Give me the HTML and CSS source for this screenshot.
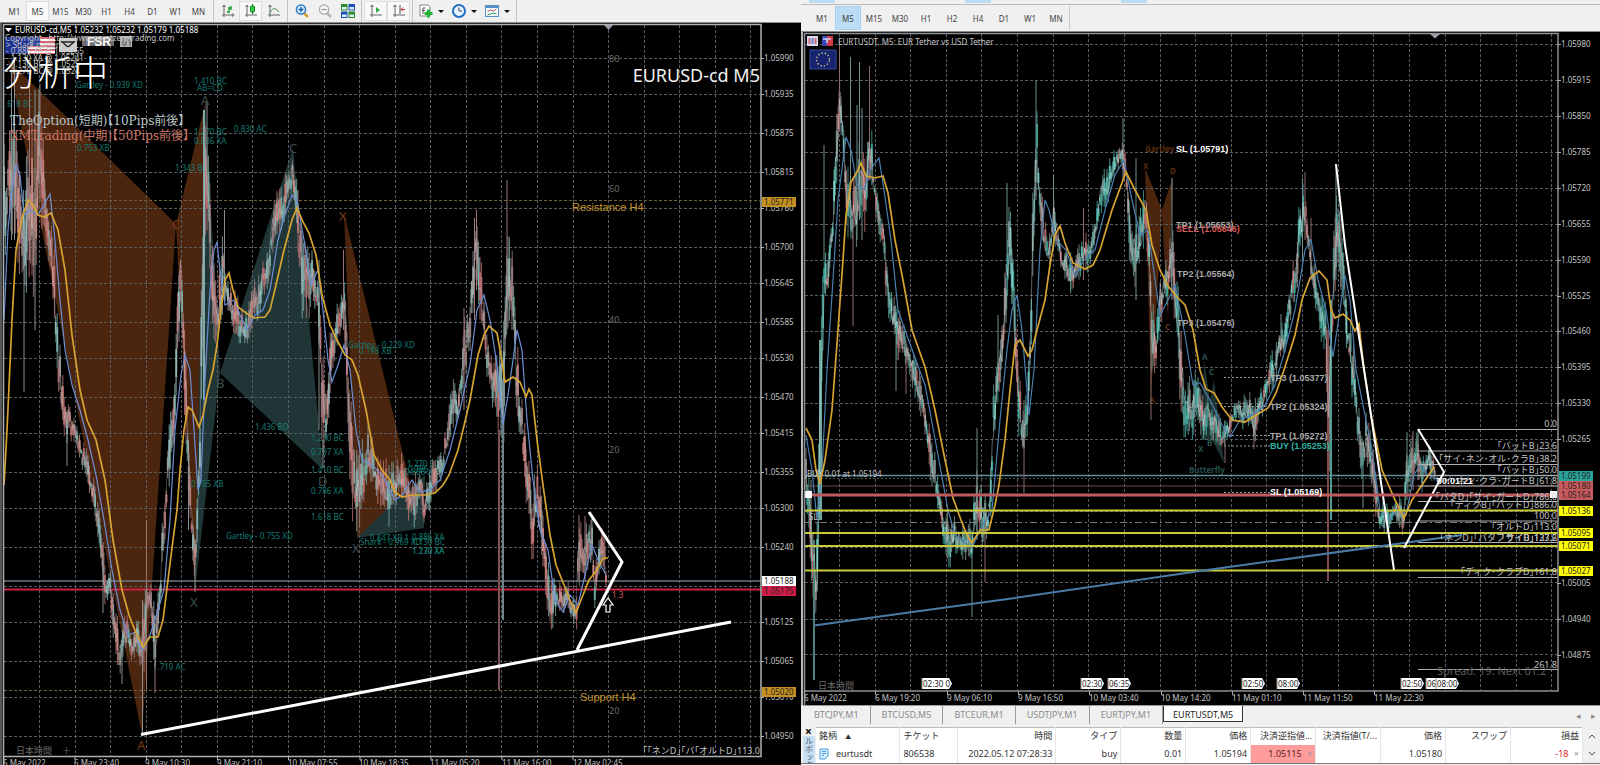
FILE: index.html
```html
<!DOCTYPE html>
<html lang="ja">
<head>
<meta charset="utf-8">
<title>EURUSD-cd M5 / EURTUSDT M5</title>
<link rel="stylesheet" href="styles.css">
</head>
<body>
<main class="desk">
  <section class="pane">
    <div class="bar bar-left">
      <div class="group frames">
        <button>M1</button><button class="on">M5</button><button>M15</button><button>M30</button><button>H1</button><button>H4</button><button>D1</button><button>W1</button><button>MN</button>
      </div>
      <div class="group">
        <button aria-label="Bar chart"><svg class="ico" viewBox="0 0 14 14"><path d="M3 1v12M1 11h12M1.500 3L3 1l1.500 2M11 9.500l2 1.500-2 1.500" stroke="#666" fill="none"/><path d="M8 3v6M8 4h2M6 8h2M10 2v4" stroke="#149a2a" fill="none" stroke-width="1.400"/></svg></button>
        <button class="on" aria-label="Candlesticks"><svg class="ico" viewBox="0 0 14 14"><path d="M3 1v12M1 11h12M1.500 3L3 1l1.500 2" stroke="#666" fill="none"/><path d="M8.500 0v10" stroke="#0a6a1a"/><rect x="6.500" y="2" width="4" height="6" rx="1" fill="#2fc845" stroke="#128a25"/></svg></button>
        <button aria-label="Line chart"><svg class="ico" viewBox="0 0 14 14"><path d="M3 1v12M1 11h12M1.500 3L3 1l1.500 2" stroke="#666" fill="none"/><path d="M3 9c2-5 5-6 9-1" stroke="#3e8f50" fill="none"/></svg></button>
      </div>
      <div class="group">
        <button aria-label="Zoom in"><svg class="ico" viewBox="0 0 14 14"><path d="M9 9l4 4" stroke="#d6a52c" stroke-width="2.500"/><circle cx="6" cy="5.500" r="4.600" fill="#d8ecfb" stroke="#2b7cc4" stroke-width="1.500"/><path d="M3.500 5.500h5M6 3v5" stroke="#1b66b5" stroke-width="1.500"/></svg></button>
        <button aria-label="Zoom out"><svg class="ico" viewBox="0 0 14 14"><path d="M9 9l4 4" stroke="#b5b5b5" stroke-width="2.500"/><circle cx="6" cy="5.500" r="4.600" fill="#f5f5f5" stroke="#aaa" stroke-width="1.300"/><path d="M3.500 5.500h5" stroke="#999" stroke-width="1.300"/></svg></button>
        <button aria-label="Tile windows"><svg class="ico" viewBox="0 0 14 14"><path d="M0 0h6.500v6.500H0zM7.500 7.500H14V14H7.500z" fill="#2c8b2c"/><path d="M7.500 0H14v6.500H7.500zM0 7.500h6.500V14H0z" fill="#1d4fae"/><path d="M1 3h4.500v2.500H1zM8.500 3H13v2.500H8.500zM1 10.500h4.500V13H1zM8.500 10.500H13V13H8.500z" fill="#dfeeff"/></svg></button>
      </div>
      <div class="group">
        <button class="on" aria-label="Auto scroll"><svg class="ico" viewBox="0 0 14 14"><path d="M3 1v12M1 11h12M1.500 3L3 1l1.500 2" stroke="#666" fill="none"/><path d="M7 3l4 3-4 3z" fill="#2ca844"/></svg></button>
        <button class="on" aria-label="Chart shift"><svg class="ico" viewBox="0 0 14 14"><path d="M3 1v12M1 11h12M1.500 3L3 1l1.500 2" stroke="#666" fill="none"/><path d="M8 1v9" stroke="#456"/><path d="M13 5.500H9M11 3.500l-2 2 2 2" stroke="#c33" fill="none"/></svg></button>
      </div>
      <div class="group wide">
        <button aria-label="Indicators"><svg class="ico" viewBox="0 0 14 14"><path d="M1 1h8l2 2v9H1z" fill="#fff" stroke="#888"/><path d="M4 10V4h2.500M3 6.500h3" stroke="#555" fill="none"/><path d="M9.500 5.500v8M5.500 9.500h8" stroke="#22b53a" stroke-width="3"/></svg><i></i></button>
        <button aria-label="Periods"><svg class="ico" viewBox="0 0 14 14"><circle cx="7" cy="7" r="6" fill="#e8f4ff" stroke="#1f6fc2" stroke-width="2"/><path d="M7 3.500V7h3" stroke="#345" fill="none"/></svg><i></i></button>
        <button aria-label="Templates"><svg class="ico" viewBox="0 0 14 14"><rect x=".5" y="1.500" width="13" height="11" fill="#f7fbff" stroke="#5b8fc4"/><path d="M1 3h12" stroke="#5b8fc4" stroke-width="2"/><path d="M2.500 7.500l3-1.500 3 1 3-2" stroke="#a55" fill="none"/><path d="M2.500 11l3-1 3-1 3 1" stroke="#2a9b4a" fill="none"/></svg><i></i></button>
      </div>
    </div>
    <svg id="eurusd" class="chart" viewBox="0 23 801 742"></svg>
  </section>

  <section class="pane pane-right">
    <div class="strip"><span></span><span></span><span></span></div>
    <div class="bar bar-right">
      <div class="group frames">
        <button>M1</button><button class="on">M5</button><button>M15</button><button>M30</button><button>H1</button><button>H2</button><button>H4</button><button>D1</button><button>W1</button><button>MN</button>
      </div>
    </div>
    <svg id="eurtusdt" class="chart" viewBox="801 32 799 673"></svg>
    <nav class="tabs">
      <a href="#a">BTCJPY,M1</a><a href="#b">BTCUSD,M5</a><a href="#c">BTCEUR,M1</a><a href="#d">USDTJPY,M1</a><a href="#e">EURTJPY,M1</a><a href="#f" class="current">EURTUSDT,M5</a>
      <span class="arrows"><button aria-label="Previous">◂</button><button aria-label="Next">▸</button></span>
    </nav>
    <div class="toolbox">
      <div class="side"><button aria-label="Close">×</button><span>ルボックス</span></div>
      <table>
        <colgroup><col style="width:84px"><col style="width:58px"><col style="width:98px"><col style="width:65px"><col style="width:65px"><col style="width:65px"><col style="width:65px"><col style="width:65px"><col style="width:65px"><col style="width:65px"><col style="width:72px"></colgroup>
        <thead><tr><th class="l">銘柄 <small>▲</small></th><th class="l">チケット</th><th>時間</th><th>タイプ</th><th>数量</th><th>価格</th><th>決済逆指値...</th><th>決済指値(T/...</th><th>価格</th><th>スワップ</th><th>損益</th></tr></thead>
        <tbody><tr><td class="l"><svg class="doc" viewBox="0 0 10 12"><path d="M1 1h8v7l-3 3H1z" fill="#d9efff" stroke="#3f9fd8"/><path d="M3 3.500h4M3 5.500h4M3 7.500h2" stroke="#3f9fd8"/></svg>eurtusdt</td><td class="l">806538</td><td>2022.05.12 07:28:33</td><td>buy</td><td>0.01</td><td>1.05194</td><td class="stop">1.05115 <b>×</b></td><td></td><td>1.05180</td><td></td><td class="loss">-18 <b>×</b></td></tr></tbody>
      </table>
      <div class="scroll"><svg viewBox="0 0 8 5"><path d="M1 4l3-3 3 3"/></svg><svg viewBox="0 0 8 5"><path d="M1 1l3 3 3-3"/></svg></div>
    </div>
  </section>
</main>
<script src="charts.js"></script>
</body>
</html>
```
FILE: styles.css
```css
* { box-sizing: border-box; }
body { margin: 0; background: #f0f0f0; font-family: "Noto Sans", "Noto Sans CJK JP", sans-serif; }
button { border: 0; padding: 0; margin: 0; background: none; font: inherit; color: inherit; }
.desk { display: grid; grid-template-columns: 801fr 799fr; height: 100vh; overflow: hidden; }
.pane { min-width: 0; display: flex; flex-direction: column; overflow: hidden; }
.chart { display: block; width: 100%; height: auto; flex: none; background: #000; }

.bar { display: flex; flex: none; background: #f0f0f0; color: #444; font-size: 8px; }
.bar-left { height: 23px; padding: 0 3px; border-bottom: 1px solid #8a8a8a; }
.bar-left .group { padding: 1px 2px; border-right: 1px solid #c4c4c4; }
.bar-left .frames { padding: 1px 3px 1px 0; }
.group { display: flex; }
.group button { width: 23px; display: flex; align-items: center; justify-content: center; }
.bar-left .on { background: #f9f9f9; border: 1px solid #dcdcdc; }
.group.wide button { width: 33px; gap: 5px; }
.group i { border: 3px solid transparent; border-top-color: #111; border-bottom: 0; }
.ico { width: 14px; height: 14px; display: block; }
.strip { height: 5px; flex: none; display: flex; gap: 130px; padding-left: 8px; border-bottom: 1px solid #b9b9b9; }
.strip span { width: 26px; height: 3px; background: #bcdcf4; }
.bar-right { height: 27px; padding: 1px 8px; border-bottom: 1px solid #8a8a8a; }
.bar-right .group { border-right: 1px solid #c9c9c9; }
.bar-right button { width: 26px; }
.bar-right .on { background: #bcdcf4; border: 1px solid #a8d0ee; }

.tabs { display: flex; flex: none; height: 19px; background: #f0f0f0; color: #8b8b8b; font-size: 9px; border-top: 1px solid #999; margin-left: 2px; }
.tabs a { color: inherit; text-decoration: none; padding: 0 11px; line-height: 17px; border-right: 1px solid #999; }
.tabs .current { background: #fff; color: #222; height: 16px; border: 1px solid #333; border-top: 0; padding: 0 9px; }
.arrows { margin-left: auto; padding-right: 4px; display: flex; gap: 10px; }

.toolbox { display: flex; flex: none; height: 37px; margin-top: 3px; color: #333; font-size: 9px; border-bottom: 1px solid #777; }
.side { width: 15px; flex: none; display: flex; flex-direction: column; align-items: center; overflow: hidden; }
.side button { font-size: 12px; line-height: 9px; font-weight: bold; color: #000; }
.side span { writing-mode: vertical-rl; white-space: nowrap; font-size: 8px; line-height: 10px; background: #c9dff2; color: #456; padding: 1px; }
table { flex: 1; min-width: 0; table-layout: fixed; border-collapse: collapse; background: #fff; border-top: 1px solid #bbb; }
th, td { height: 17px; padding: 0 3px; line-height: 16px; font-weight: normal; text-align: right; white-space: nowrap; border-right: 1px solid #e6e6e6; }
.l { text-align: left; }
small { font-size: 6px; margin-left: 6px; vertical-align: middle; }
.doc { width: 10px; height: 12px; margin-right: 7px; vertical-align: middle; }
td b { font-weight: normal; color: #999; margin-left: 3px; }
.stop { background: #ff9c9c; color: #5b2222; }
.loss { color: #e02020; }
.scroll { width: 17px; display: flex; flex-direction: column; justify-content: space-between; align-items: center; padding: 7px 0; }
.scroll svg { width: 8px; fill: none; stroke: #444; }

.t { font-family: "Noto Sans", "Noto Sans CJK JP", sans-serif; font-size: 8px; fill: #c4c4c4; }
.jp { font-size: 9px; font-feature-settings: "halt" 1; }
.teal { fill: #137a70; }
.mark { font-size: 13px; fill: #3a5050; }
.brown { fill: #7a3a17; }
.dim { fill: #6a6a6a; font-size: 9px; }
.gold { fill: #c4962c; font-family: "Liberation Sans", sans-serif; font-size: 11px; }
.title { font-size: 18px; fill: #f2f2f2; }
.busy { font-size: 35px; fill: #fff; font-weight: 300; }
.opt { font-family: "DejaVu Serif", "Noto Sans CJK JP", serif; font-size: 12px; font-feature-settings: "halt" 1; fill: #b9c7c7; }
.xm { fill: #cf7767; }
.end { text-anchor: end; }
.lvl { font-family: "Liberation Sans", sans-serif; font-size: 9px; font-weight: bold; fill: #ababab; }
.badge { font-size: 12px; }
.white { fill: #fff; }
.red { fill: #d65a5a; }
.cyan { fill: #2fb3a6; }
.dark { fill: #222; }
.deep { fill: #26504c; font-weight: bold; }
.umber { fill: #5a2d12; font-weight: bold; }
.spread { font-size: 11px; fill: #5c5c5c; }
```
FILE: charts.js
```javascript
const NS = 'http://www.w3.org/2000/svg';

function painter(id) {
  const root = document.getElementById(id);
  const put = (tag, attrs, text) => {
    const el = document.createElementNS(NS, tag);
    for (const k in attrs) el.setAttribute(k, attrs[k]);
    if (text !== undefined) el.textContent = text;
    root.appendChild(el);
    return el;
  };
  return {
    path: (d, stroke, w = 1, more = {}) => put('path', { d, stroke, fill: 'none', 'stroke-width': w, ...more }),
    poly: (points, fill) => put('polygon', { points, fill }),
    rect: (x, y, width, height, fill, more = {}) => put('rect', { x, y, width, height, fill, ...more }),
    text: (x, y, s, cls = '') => put('text', { x, y, class: 't ' + cls }, s),
  };
}

const toPath = s => 'M' + s.trim().split(/\s+/).join('L');

function random(seed) {
  return () => {
    seed = (seed * 1664525 + 1013904223) % 4294967296;
    return seed / 4294967296;
  };
}

/* Envelope rows are "x,top,bottom". Rising stretches favour the first half of
   the palette, falling stretches the second half. Bodies are thicker than wicks. */
function bars(p, env, colors, seed) {
  const rows = env.trim().split(/\s+/).map(r => r.split(',').map(Number));
  const rnd = random(seed);
  const wicks = colors.map(() => '');
  const bodies = colors.map(() => '');
  const half = colors.length / 2;
  const fast = [];
  let i = 0;
  for (let x = rows[0][0]; x < rows[rows.length - 1][0]; x += 1.4) {
    while (rows[i + 1][0] <= x) i++;
    const f = (x - rows[i][0]) / (rows[i + 1][0] - rows[i][0]);
    const top = rows[i][1] + (rows[i + 1][1] - rows[i][1]) * f;
    const bot = rows[i][2] + (rows[i + 1][2] - rows[i][2]) * f;
    const falling = rows[i + 1][1] + rows[i + 1][2] > rows[i][1] + rows[i][2];
    const h = bot - top;
    const a = top + h * rnd() * 0.55;
    const b = bot - h * rnd() * 0.4;
    const side = rnd() < 0.7 ? falling : !falling;
    const k = Math.floor(rnd() * half) + (side ? half : 0);
    wicks[k] += `M${x.toFixed(1)} ${a.toFixed(1)}V${b.toFixed(1)}`;
    const m = (a + b) / 2;
    bodies[k] += `M${x.toFixed(1)} ${(m - (b - a) * 0.25).toFixed(1)}V${(m + (b - a) * 0.2).toFixed(1)}`;
    fast.push(`${x.toFixed(1)},${((top + bot) / 2 + (rnd() - 0.5) * h * 0.4).toFixed(1)}`);
  }
  colors.forEach((c, k) => p.path(wicks[k], c, 1, { opacity: 0.85 }));
  colors.forEach((c, k) => p.path(bodies[k], c, 2));
  return fast;
}

function grid(p, xs, ys, x0, x1, y0, y1) {
  let d = '';
  xs.forEach(x => { d += `M${x} ${y0}V${y1}`; });
  ys.forEach(y => { d += `M${x0} ${y}H${x1}`; });
  p.path(d, '#595c60', 1, { 'stroke-dasharray': '3 2' });
}

const steps = (a, step, n) => Array.from({ length: n }, (_, i) => Math.round(a + i * step) + 0.5);

/* ---- EURUSD-cd ---- */
{
  const p = painter('eurusd');
  p.poly('8,60 142,735 176,224', '#4c250f');
  p.poly('176,224 206,100 195,590', '#4c250f');
  p.poly('195,590 205,100 220,373', '#203636');
  p.poly('220,373 293,148 323,470', '#203636');
  p.poly('344,213 402,450 412,490 357,538', '#4c250f');
  p.poly('357,538 396,500 425,475 424,528', '#203636');

  grid(p, steps(39, 35.57, 21), [58.5, 94.5, 133.5, 172.5, 208.5, 247.5, 283.5, 322.5, 358.5, 397.5, 433.5, 472.5, 508.5, 547.5, 586.5, 622.5, 661.5, 697.5, 736.5], 4, 760, 25, 756);
  p.path('M4 200.500H760M4 690.500H760', '#6f6038', 1, { 'stroke-dasharray': '3 2' });

  [[76, 88, 'Gartley - 0.939 XD'], [5, 107, '.618 BC'], [77, 151, '0.753 XB'], [194, 84, '1.410 BC'], [197, 91, 'AB=CD'], [194, 135, '1.270 BC'], [194, 144, '0.886 XA'], [234, 132, '0.830 AC'], [175, 171, '1.343 BD'], [348, 348, 'Gartley - 0.229 XD'], [359, 354, '0.198 XB'], [255, 430, '1.436 BD'], [311, 441, '1.270 BC'], [311, 455, '0.707 XA'], [311, 473, '1.410 BC'], [311, 494, '0.786 XA'], [311, 520, '1.618 BC'], [191, 487, '0.755 XB'], [226, 539, 'Gartley - 0.755 XD'], [153, 670, '1.719 AC'], [360, 545, 'Shark - 0.969 XD'], [370, 541, '0.847 XB 1'], [412, 540, '0.886 XA'], [412, 545, '1.130 BC'], [412, 554, '1.130 XA'], [412, 554, '1.270 XA'], [407, 467, '1.270 BC'], [405, 475, '0.886 XA'], [408, 472, '0.786 XB']].forEach(a => p.text(a[0], a[1], a[2], 'teal'));

  p.path('M4 581H761', '#6d7782', 1.5);
  p.path('M4 589.500H761', '#c92543', 2);

  const fast = bars(p, `4,120,300 8,100,240 14,110,240 20,130,290 24,150,300 30,120,290 35,90,330 40,85,215 43,130,240 50,215,270 54,240,320 57,300,380 61,350,420 66,390,450 72,400,440 80,430,465 88,450,490 95,480,520 100,510,575 105,555,610 110,565,600 115,600,660 120,625,680 126,610,650 132,625,670 138,600,660 143,610,700 146,540,640 149,570,610 154,600,680 158,590,650 161,550,600 164,480,560 168,430,500 172,400,470 176,330,430 179,240,350 181,225,300 184,300,400 187,380,480 191,480,540 195,530,590 198,450,550 201,300,470 204,110,330 206,100,220 209,150,270 213,230,350 217,280,360 221,250,330 224,220,300 227,270,310 232,290,330 237,290,340 243,310,350 248,310,350 252,265,330 257,280,330 262,265,310 268,240,290 273,180,260 278,190,245 283,180,230 288,165,210 292,145,190 297,180,240 302,220,320 307,240,330 313,250,300 318,260,330 322,330,450 325,370,460 328,360,440 332,300,380 338,300,350 342,280,350 345,260,340 348,340,450 352,380,520 357,450,545 363,430,510 369,420,490 375,440,500 382,450,510 388,460,530 395,460,510 402,450,500 408,470,520 415,470,530 420,460,500 424,480,530 430,460,510 437,450,490 443,440,480 448,410,450 453,375,430 458,390,430 462,330,400 468,300,370 474,220,320 476,210,290 480,250,330 485,290,350 489,340,410 494,350,410 499,350,440 503,320,480 507,220,340 510,240,320 513,240,350 516,310,420 519,370,450 523,390,470 528,450,530 533,480,570 538,460,520 542,490,560 547,540,610 551,580,635 556,570,620 562,580,620 568,580,620 573,590,625 576,570,645 578,530,600 580,515,580 584,520,585 588,510,570 592,515,560 595,560,615 598,540,580 601,525,570 605,540,590 607,550,600`, ['#6fa39e', '#858a8a', '#86a9aa', '#b06c6f', '#94797b', '#c07b76'], 7);
  p.path('M11.500 70V240M14.500 60V240M24 230V392M35 90V330M142.500 600V735M103 560V613M122 640V684M188.500 440V530M195 560V592M224.500 210V300M323 440V468M319 260V430M207 102V200M67 420V466', '#86918f', 1);
  p.path('M29.500 80V260M40 84V200M146.500 520V690M155 640V693M343.500 250V330M345 300V350M474.500 218V320M476.500 210V290M464 308V410M507 180V330M512 258V330M538.500 500V527M579 515V580M585 516V580M591 520V560', '#9c7677', 1);
  p.path('M499 430V690', '#7c5356', 2);
  p.path('M503 380V620', '#6f8486', 2);
  p.path('M204 110V400', '#7fa8a7', 2);
  p.path('M' + fast.join('L'), '#dfe3e4', 0.7, { opacity: 0.4 });
  p.path(toPath('4,320 8,230 12,190 16,165 20,175 24,215 30,210 38,215 44,205 50,194 54,230 60,300 65,350 72,385 80,410 88,440 96,475 104,520 112,570 120,610 128,635 136,632 142,650 150,635 158,610 164,590 170,520 175,430 181,375 185,355 190,370 194,430 198,490 201,480 205,380 210,290 214,250 217,242 220,270 225,305 234,300 240,315 247,330 255,315 263,310 270,290 278,240 285,215 292,195 297,200 304,240 311,285 318,270 323,310 328,360 332,382 338,365 344,345 350,370 356,430 362,460 372,465 382,475 395,500 402,495 412,480 420,492 430,490 440,480 450,450 460,410 470,365 477,310 484,295 490,320 497,365 503,425 508,395 513,360 517,330 522,350 527,420 533,480 540,530 548,550 555,600 563,612 570,595 578,605 585,575 592,545 598,560 606,575'), '#6c8fd6', 1.2);
  p.path(toPath('4,485 7,430 12,320 16,250 22,218 28,200 33,205 38,215 44,217 51,213 58,230 65,270 72,335 80,390 87,420 96,440 105,480 113,540 122,590 129,615 136,633 143,647 150,637 158,637 163,620 168,580 173,540 177,510 180,470 184,430 188,407 192,410 199,427 203,415 208,390 213,370 217,345 221,310 225,280 229,273 233,290 238,307 246,313 254,318 265,317 270,310 276,285 284,250 292,220 297,208 303,222 309,233 316,255 322,295 330,325 337,340 345,355 352,360 358,375 366,410 374,455 382,470 390,480 395,492 402,497 412,495 425,495 435,493 443,485 449,475 458,450 463,430 470,400 478,355 484,335 489,326 497,333 501,355 505,382 513,377 520,382 526,397 529,389 532,395 537,440 543,485 550,535 556,565 564,585 571,603 576,613 581,600 589,580 597,570 603,558 608,558'), '#d7a431', 1.7);

  p.path('M141 734.500L731 622', '#fff', 3);
  p.path('M589 512L622 562L577 650', '#fff', 3);
  p.path('M608 598l-5 7h3v7h4v-7h3z', '#fff', 1.2, { fill: '#000' });

  p.rect(762, 23, 39, 742, '#000');
  p.path('M3.500 765V24.500H761V756.500H4', '#aeb2b4', 1.5);
  p.path('M1 765V23', '#777', 1.5);
  p.path('M4 756v4M75 756v4M146.500 756v4M217.500 756v4M288.500 756v4M360 756v4M431 756v4M502 756v4M573 756v4', '#aeb2b4');
  p.poly('604,25 613,25 608.5,30', '#9da0ab');

  [[58, '1.05990'], [94, '1.05935'], [133, '1.05875'], [172, '1.05815'], [208, '1.05760'], [247, '1.05700'], [283, '1.05645'], [322, '1.05585'], [358, '1.05530'], [397, '1.05470'], [433, '1.05415'], [472, '1.05355'], [508, '1.05300'], [547, '1.05240'], [622, '1.05125'], [661, '1.05065'], [697, '1.05010'], [736, '1.04950']].forEach(a => { p.path(`M761 ${a[0] + 0.5}h3`, '#aeb2b4'); p.text(764, a[0] + 3, a[1]); });
  [[197, '#c4901f', '1.05771', 'dark'], [576, '#fff', '1.05188', 'dark'], [586, '#d01c46', '1.05175', 'dark'], [687, '#c4901f', '1.05020', 'dark']].forEach(a => { p.rect(762, a[0], 34, 10, a[1]); p.text(764, a[0] + 8, a[2], a[3]); });
  [[3, '6 May 2022'], [74, '6 May 23:40'], [145, '9 May 10:30'], [217, '9 May 21:10'], [288, '10 May 07:55'], [359, '10 May 18:35'], [430, '11 May 05:20'], [502, '11 May 16:00'], [573, '12 May 02:45']].forEach(a => p.text(a[0], 766, a[1]));

  [[62, '80'], [192, '60'], [323, '40'], [453, '20'], [714, '20']].forEach(a => p.text(609, a[0], a[1], 'dim'));
  p.text(572, 211, 'Resistance H4', 'gold');
  p.text(580, 701, 'Support H4', 'gold');
  p.text(612, 598, '1.3', 'red');
  p.text(760, 82, 'EURUSD-cd M5', 'title end');
  p.text(760, 754, '｢｢ネンD｣｢バ｢オルトD｣113.0', 'jp end');
  p.text(16, 754, '日本時間', 'jp dim');
  p.text(62, 754, '＋', 'jp dim');
  p.text(201, 105, 'A', 'mark');
  p.text(289, 153, 'C', 'mark');
  p.text(190, 607, 'X', 'mark');
  p.text(216, 388, 'B', 'mark');
  p.text(318, 486, 'D', 'mark');
  p.text(352, 553, 'X', 'mark');
  p.text(172, 229, 'C', 'mark brown');
  p.text(339, 221, 'X', 'mark brown');
  p.text(137, 750, 'A', 'mark brown');

  p.rect(5, 37, 23, 17, '#1c2f92');
  p.rect(28, 37, 27, 17, '#d9606e');
  p.path('M28 40h27M28 44h27M28 48h27M28 52h27', '#fff', 2);
  p.rect(28, 37, 12, 9, '#3347a0');
  p.rect(59, 38, 18, 14, '#d0d0d0');
  p.path('M62 42h12l-6 5z', '#222', 1.5);
  p.rect(82, 36, 32, 10, '#6c6c6c');
  p.text(87, 46, 'FSR', 'lvl badge white');
  p.rect(120, 36, 12, 11, '#b0b0b0');
  p.path('M123 38v7h3v-5h4v6', '#555');
  p.poly('5,28 12,28 8.5,32', '#fff');
  p.text(15, 33, 'EURUSD-cd,M5  1.05232 1.05232 1.05179 1.05188', 'white');
  p.text(5, 41, 'Copyright - http://www.pointzerotrading.com');
  p.text(6, 48, '> Shark pattern');
  p.text(6, 54, '- 0.886 XA @ 1.05265');
  p.text(6, 61, '- 1.130 XA @ 1.05241');
  p.text(6, 67, '- 1.130 BC @ 1.0525');
  p.text(6, 74, '- 1.270 BC @ 1.0524');
  p.text(3, 86, '分析中', 'busy');
  p.text(10, 125, 'TheOption(短期)【10Pips前後】', 'opt');
  p.text(10, 140, 'XMTrading(中期)【50Pips前後】', 'opt xm');
}

/* ---- EURTUSDT ---- */
{
  const p = painter('eurtusdt');
  p.poly('1145,168 1151,395 1162,215 1168,320 1173,176 1162,210', '#4c250f');
  p.poly('1201,440 1204,360 1210,400 1214,380 1224,463 1212,440', '#1d3331');
  grid(p, steps(839, 35.62, 21), [44.5, 80.5, 116.5, 152.5, 188.5, 224.5, 260.5, 295.5, 331.5, 367.5, 403.5, 439.5, 475.5, 511.5, 547.5, 582.5, 619.5, 654.5], 805, 1557, 34, 690);

  [[1145, 152, 'Gartley', 'umber'], [1189, 473, 'Butterfly', 'deep'], [1143, 169, 'X', 'umber'], [1170, 174, 'D', 'umber'], [1165, 330, 'C', 'umber'], [1149, 403, 'A', 'umber'], [1202, 360, 'A', 'deep'], [1209, 375, 'C', 'deep'], [1207, 446, 'B', 'deep'], [1198, 452, 'X', 'deep']].forEach(a => p.text(...a));
  p.path('M805 475.500H1558', '#668c9b', 1.5);
  p.path('M805 478.500H1558', '#3d5f55', 1, { 'stroke-dasharray': '2 2' });
  p.path('M805 486H1558', '#7a4548', 1.2);
  p.path('M805 522.500H1558', '#777', 1, { 'stroke-dasharray': '7 3 2 3' });

  const colors = ['#3fa398', '#5cb5ab', '#74938f', '#b16a6c', '#8d8583', '#4f8f88'];
  const fast = bars(p, `806,440,500 810,480,560 813,500,640 817,530,620 820,350,500 824,240,330 829,240,290 833,190,250 837,90,180 840,60,130 843,110,150 847,160,250 851,180,240 856,170,250 860,130,240 865,150,240 870,110,180 873,140,210 878,180,230 883,200,265 887,250,310 892,290,340 897,300,360 903,320,365 910,340,380 917,360,405 922,380,420 928,410,460 933,440,500 938,470,510 943,500,550 949,510,570 955,510,560 962,520,570 968,510,560 972,520,580 975,460,550 979,480,540 983,490,550 988,490,550 991,440,520 994,370,450 998,340,410 1003,310,380 1007,220,310 1010,200,270 1014,260,350 1018,350,430 1023,410,470 1028,380,430 1031,270,370 1034,140,260 1036,95,180 1040,150,230 1045,220,270 1050,230,270 1054,190,240 1057,210,260 1062,240,280 1068,240,300 1074,260,290 1080,240,280 1085,230,270 1090,230,280 1095,210,250 1101,165,220 1106,170,215 1112,150,190 1116,145,175 1122,130,170 1126,150,200 1131,210,290 1136,220,290 1142,200,260 1146,170,240 1149,210,300 1152,290,380 1156,320,380 1160,260,330 1166,260,310 1172,190,290 1176,250,350 1180,310,410 1185,370,445 1190,370,445 1197,370,430 1203,390,440 1210,390,440 1217,410,445 1224,420,460 1230,410,440 1237,390,420 1243,395,435 1249,385,425 1254,400,450 1260,390,425 1266,370,410 1272,350,395 1279,320,370 1284,320,360 1290,280,325 1296,240,300 1301,180,260 1305,180,240 1310,230,280 1316,270,320 1321,290,345 1326,300,360 1329,320,500 1332,280,370 1335,190,300 1338,200,270 1343,230,310 1347,290,360 1352,330,400 1357,380,440 1362,430,490 1366,410,470 1371,430,480 1376,470,520 1380,500,535 1386,500,535 1392,500,525 1398,495,525 1404,490,540 1407,430,500 1411,430,490 1416,430,480 1421,440,495 1424,450,495 1429,440,480 1435,450,490`, colors, 23);
  p.path('M824 145V260M850.500 57V230M859.500 62V220M857 105V240M862 108V240M972 530V617M977 428V540M1036 80V200M1053.500 175V250M1123 118V180M1136 158V300M1172 178V300M896 330V391M1302.500 178V260M1281 314V350M1407 432V500M1418 430V480M1363 440V508M1336 165V280M998 315V370M811 480V548M1007 183V260', '#6e8f8b', 1);
  p.path('M839.500 40V130M869.500 66V180M853 230V326M985 500V582M1024 400V493M1083.500 208V280M1151 320V420M906 340V394M1305 172V240M1311 218V280M1413 431V490M1225 440V463M1341 210V290M1254 410V449', '#8b6a6a', 1);
  p.path('M814 540V680', '#4d817b', 2);
  p.path('M1328 330V581', '#7c4b4c', 2);
  p.path('M1331 300V520', '#4f9c94', 2);
  p.path('M820.500 340V520', '#6ea6a0', 3);
  p.path('M' + fast.join('L'), '#e4ecee', 0.8, { opacity: 0.5 });
  p.path(toPath('806,435 812,470 817,520 822,470 827,370 833,280 838,200 846,137 851,150 857,185 864,190 870,170 879,158 884,190 891,240 898,310 910,344 925,385 938,455 948,510 955,535 962,540 972,548 980,530 992,510 1000,420 1007,350 1012,310 1017,295 1022,330 1029,415 1034,370 1040,250 1045,200 1049,210 1056,240 1066,250 1075,277 1084,260 1095,250 1105,210 1115,175 1124,160 1132,200 1140,235 1148,230 1155,280 1160,315 1168,300 1175,285 1185,335 1193,385 1200,383 1210,400 1222,425 1230,437 1240,420 1252,415 1265,405 1275,385 1285,350 1295,310 1305,250 1311,240 1318,280 1326,310 1333,357 1340,310 1345,275 1350,300 1356,370 1364,410 1372,450 1380,510 1388,520 1398,510 1406,515 1414,475 1420,465 1428,475 1435,478'), '#4a7fb0', 1.2);
  p.path(toPath('806,428 812,440 816,470 820,484 825,460 832,410 838,330 843,260 846,215 851,182 857,172 861,163 866,176 875,178 883,176 888,193 895,240 903,280 912,330 925,367 935,410 943,450 953,498 961,520 967,535 972,543 980,530 989,530 995,505 999,485 1005,440 1010,390 1015,345 1020,340 1028,356 1032,350 1037,330 1045,300 1050,265 1055,235 1060,226 1065,243 1073,263 1085,269 1093,265 1100,250 1112,210 1126,172 1135,190 1146,210 1152,245 1160,270 1168,286 1178,298 1185,305 1193,330 1200,370 1206,389 1214,393 1222,407 1232,420 1245,422 1258,414 1268,408 1276,393 1284,370 1295,335 1302,300 1310,278 1319,271 1327,280 1331,310 1335,318 1343,314 1350,320 1355,331 1359,324 1364,370 1371,415 1376,440 1382,470 1395,500 1404,518 1412,500 1422,485 1434,467'), '#d7a431', 1.7);

  p.path('M805 510.500H1558M805 533H1558M805 546H1558M805 570.500H1558', '#c9c93c', 1.8);
  p.path('M814 625.500L1015 598L1200 571L1462 535', '#4a7ba6', 2);
  p.path('M1418 429.500H1558M1418 451H1558M1418 464.500H1558M1418 475.500H1558M1418 486H1558M1418 501.500H1558M1418 521H1558M1418 542.500H1558M1418 577.500H1558M1418 669.500H1558', '#b0b0b0', 1.2);
  p.path('M1336 164L1345 245L1371 415L1394 570', '#fff', 2);
  p.path('M1418 429L1444 472L1404 548', '#fff', 2);
  p.path('M805 495H1558', '#bd5a5e', 3);
  p.rect(805, 491, 7, 7, '#fff');
  p.rect(1550, 491, 7, 7, '#fff');

  [[1176, 152, 'SL (1.05791)', 'lvl white'], [1176, 228, 'TP1 (1.05653)', 'lvl'], [1176, 232, 'SELL (1.05646)', 'lvl red'], [1177, 277, 'TP2 (1.05564)', 'lvl'], [1177, 326, 'TP3 (1.05476)', 'lvl'], [1270, 381, 'TP3 (1.05377)', 'lvl'], [1270, 410, 'TP2 (1.05324)', 'lvl'], [1270, 439, 'TP1 (1.05272)', 'lvl'], [1270, 449, 'BUY (1.05253)', 'lvl cyan'], [1270, 495, 'SL (1.05169)', 'lvl white']].forEach(a => p.text(...a));
  p.path('M1224 377.500h46M1224 406.500h46M1224 435.500h46M1224 446h46M1224 492.500h46', '#999', 1, { 'stroke-dasharray': '2 2' });
  [[427, '0.0'], [449, '｢バットB｣23.6'], [462, '｢サイ･ネン･オル･クラB｣38.2'], [473, '｢バットB｣50.0'], [484, 'サイ･ネン･クラ･ガートB｣61.8'], [500, '｢バタD｣｢サイ･ガートD｣786.0'], [508, '｢ディクB｣｢バットD｣886.0'], [519, '100.0'], [530, '｢オルトD｣113.0'], [541, '｢ネンD｣｢バタフライD｣127.2'], [541, '｢サイB｣133.6'], [575, '｢ディク･クラブD｣161.8'], [668, '261.8']].forEach(a => p.text(1557, a[0], a[1], 'jp end'));
  p.text(1437, 484, '00:01:21', 'lvl white');
  p.text(807, 477, 'BUY 0.01 at 1.05194');
  p.text(809, 520, 'SL');
  p.text(1437, 675, 'Spread: 19. Next 01:2', 'spread');
  p.text(818, 689, '日本時間', 'jp dim');

  p.rect(1558, 33, 42, 672, '#000');
  p.path('M805 691H1558V33.500H804.500V705', '#8d9092', 1.5);
  p.path('M802 32V705', '#b8b8b8', 2);
  p.poly('1430,34 1440,34 1435,38.5', '#9b9ea2');
  [[44, '1.05980'], [80, '1.05915'], [116, '1.05850'], [152, '1.05785'], [188, '1.05720'], [224, '1.05655'], [260, '1.05590'], [296, '1.05525'], [331, '1.05460'], [367, '1.05395'], [403, '1.05330'], [439, '1.05265'], [583, '1.05005'], [619, '1.04940'], [655, '1.04875']].forEach(a => { p.path(`M1557 ${a[0] + 0.5}h4`, '#aaa'); p.text(1561, a[0] + 3, a[1]); });
  [[471, '#28a399', '1.05199'], [481, '#c9595c', '1.05180'], [490, '#c9595c', '1.05164'], [506, '#ff0', '1.05136'], [528, '#ff0', '1.05095'], [541, '#ff0', '1.05071'], [566, '#ff0', '1.05027']].forEach(a => { p.rect(1559, a[0], 34, 10, a[1]); p.text(1561, a[0] + 8, a[2], 'dark'); });
  [[804, '6 May 2022'], [875, '6 May 19:20'], [947, '9 May 06:10'], [1018, '9 May 16:50'], [1089, '10 May 03:40'], [1161, '10 May 14:20'], [1232, '11 May 01:10'], [1303, '11 May 11:50'], [1374, '11 May 22:30']].forEach(a => { p.path(`M${a[0] + 0.5} 691v4`, '#aaa'); p.text(a[0], 701, a[1]); });
  [[922, '02:30 0', 30], [1081, '02:30', 23], [1108, '06:35', 23], [1242, '02:50', 23], [1277, '08:00', 23], [1401, '02:50', 23], [1426, '06', 23], [1436, '08:00', 23]].forEach(a => {
    const [x, s, w] = a;
    p.poly(`${x},678 ${x + w - 3},678 ${x + w},683.5 ${x + w - 3},689 ${x},689`, '#fff');
    p.path(`M${x} 678v11`, '#888');
    p.text(x + 1, 686.5, s, 'dark');
  });

  p.rect(807, 36, 11, 10, '#d9d9f2');
  p.path('M809.500 38v6M815.500 38v6', '#cc6a78', 2);
  p.path('M812.500 38v6', '#6f80cf', 2);
  p.rect(822, 36, 5, 10, '#3747b5');
  p.rect(827, 36, 6, 10, '#cf3b44');
  p.path('M823 39h8M827 39v4', '#cfd8ff', 1.5);
  p.rect(810, 50, 26, 19, '#16246f', { stroke: '#3b4a98' });
  p.path('M829.500 59.500a6.500 6.500 0 1 0-13 0a6.500 6.500 0 1 0 13 0', '#c9bf7c', 1.5, { 'stroke-dasharray': '1.400 2' });
  p.text(838, 45, 'EURTUSDT, M5:  EUR Tether vs USD Tether');
}
```
